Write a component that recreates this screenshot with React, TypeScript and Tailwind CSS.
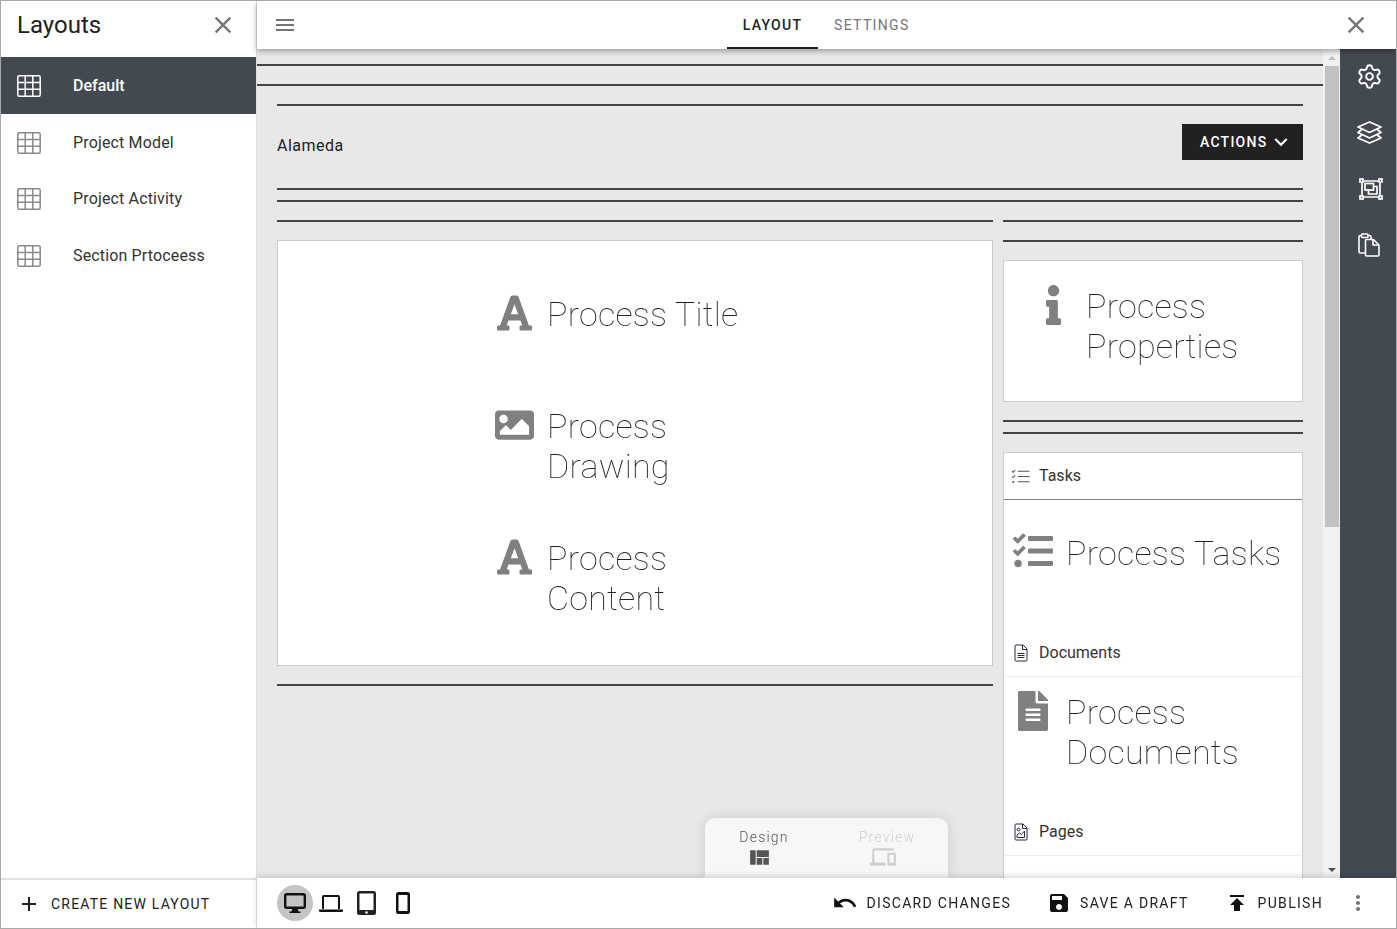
import React from "react";
import { FaFont, FaImage, FaInfo, FaTasks, FaFileAlt } from "react-icons/fa";
import { MdClose, MdMenu, MdExpandMore, MdUndo, MdSave, MdPublish, MdMoreVert, MdViewQuilt, MdDevices, MdAdd } from "react-icons/md";
import { Settings } from "lucide-react";

function Grid({ className = "" }: { className?: string }) {
  return (
    <svg viewBox="0 0 24 22" className={className} fill="none" stroke="currentColor" strokeWidth="1.5">
      <rect x="0.8" y="0.8" width="22.4" height="20.4" rx="1.5" />
      <path d="M0.8 7.5H23.2M0.8 14.3H23.2M8.2 0.8V21.2M15.8 0.8V21.2" />
    </svg>
  );
}

function Line({ className = "" }: { className?: string }) {
  return <div className={`h-[2px] bg-[#444444] ${className}`} />;
}

function Big({ icon, children, className = "" }: { icon: React.ReactNode; children: React.ReactNode; className?: string }) {
  return (
    <div className={`flex items-start ${className}`}>
      <div className="w-[40px] shrink-0 flex justify-center text-[#808080] mr-[13px]">{icon}</div>
      <div className="text-[34px] leading-[40px] font-thin tracking-[0.25px] text-[#212121] [will-change:transform]">{children}</div>
    </div>
  );
}

function SmallDoc({ image }: { image?: boolean }) {
  return (
    <svg viewBox="0 0 14 18" className="w-[14px] h-[18px] text-[#2e2840]" fill="none" stroke="currentColor" strokeWidth="1">
      <path d="M1 2a1 1 0 0 1 1-1h7l4 4v11a1 1 0 0 1-1 1H2a1 1 0 0 1-1-1z" />
      <path d="M8.500 1v4.500H13" />
      {image ? (
        <>
          <circle cx="4.500" cy="6.500" r="1.500" />
          <path d="M3 14.500v-2.500l2.500-2 2 1.500 3-3.500V14.500z" />
        </>
      ) : (
        <path d="M3.500 9.500h7M3.500 11.500h7M3.500 13.500h7" />
      )}
    </svg>
  );
}

const items = [
  { t: "Project Model", h: "h-[57px]" },
  { t: "Project Activity", h: "h-[56px]" },
  { t: "Section Prtoceess", h: "h-[57px]" },
];

export default function App() {
  return (
    <div className="w-[1397px] h-[929px] flex overflow-hidden border border-[#a8a8a8] bg-white text-[#212121] font-['Roboto',sans-serif]">
      <aside className="w-[256px] shrink-0 flex flex-col border-r border-[#e0e0e0] bg-white">
        <div className="h-[56px] flex items-center justify-between pl-4 pr-[19px] pb-[8px]">
          <span className="text-[24px] leading-[32px]">Layouts</span>
          <MdClose className="text-[28px] text-[#757575]" />
        </div>
        <div className="h-[57px] flex items-center bg-[#424950] text-white pl-4">
          <Grid className="w-[24px] h-[22px]" />
          <span className="ml-8 text-[16px] font-medium">Default</span>
        </div>
        {items.map(({ t, h }) => (
          <div key={t} className={`${h} flex items-center pl-4`}>
            <Grid className="w-[24px] h-[22px] text-[#8a8a8a]" />
            <span className="ml-8 text-[16px] tracking-[0.15px] text-[#333]">{t}</span>
          </div>
        ))}
        <div className="mt-auto h-[50px] border-t-2 border-[#e0e0e0] flex items-center pl-[16px]">
          <MdAdd className="text-[24px] text-[#212121]" />
          <span className="ml-[10px] text-[14px] tracking-[1.2px] text-[#212121]">CREATE NEW LAYOUT</span>
        </div>
      </aside>

      <div className="flex-1 min-w-0 flex flex-col">
        <header className="relative z-20 h-[48px] shrink-0 bg-white shadow-[0_2px_6px_rgba(0,0,0,0.35)] flex items-center pl-4 pr-[26px]">
          <MdMenu className="text-[24px] text-[#757575]" />
          <div className="ml-[430px] flex h-full">
            <div className="w-[91px] pt-[2px] flex items-center justify-center border-b-2 border-[#212121] text-[14px] font-medium tracking-[1.25px] text-[#212121]">LAYOUT</div>
            <div className="ml-[16px] pt-[1px] flex items-center text-[14px] tracking-[1.35px] text-[#757575]">SETTINGS</div>
          </div>
          <MdClose className="ml-auto text-[28px] text-[#757575]" />
        </header>

        <div className="flex-1 min-h-0 flex">
          <main className="relative flex-1 min-w-0 bg-[#e8e8e8] overflow-hidden pt-[15px]">
            <Line />
            <Line className="mt-[18px]" />
            <div className="px-5 pt-[18px]">
              <Line />
              <div className="h-[36px] mt-[18px] flex items-center justify-between">
                <span className="text-[16px] tracking-[0.5px] pt-[8px]">Alameda</span>
                <button className="w-[121px] h-[36px] pl-[18px] bg-[#212121] text-white text-[14px] font-medium tracking-[1.25px] flex items-center">
                  ACTIONS
                  <MdExpandMore className="text-[26px] ml-[1px]" />
                </button>
              </div>
              <Line className="mt-[28px]" />
              <Line className="mt-[10px]" />
              <div className="mt-[18px] flex gap-[10px] items-start">
                <div className="w-[716px] shrink-0">
                  <Line />
                  <div className="mt-[18px] h-[426px] bg-white border border-[#cccccc] pl-[216px] pt-[53px]">
                    <Big icon={<FaFont className="w-[40px] h-[40px] -mt-[1px] ml-[1px]" />} className="h-[112px]">Process Title</Big>
                    <Big icon={<FaImage className="w-[40px] h-[40px] -mt-[1px] ml-[1px]" />} className="h-[132px]">Process<br />Drawing</Big>
                    <Big icon={<FaFont className="w-[40px] h-[40px] -mt-[1px] ml-[1px]" />}>Process<br />Content</Big>
                  </div>
                  <Line className="mt-[18px]" />
                </div>
                <div className="flex-1 min-w-0">
                  <Line />
                  <Line className="mt-[18px]" />
                  <div className="mt-[18px] h-[142px] bg-white border border-[#cccccc] pl-[29px] pt-[25px]">
                    <Big icon={<FaInfo className="w-[15px] h-[40px] -mt-[1px]" />}>Process<br />Properties</Big>
                  </div>
                  <Line className="mt-[18px]" />
                  <Line className="mt-[10px]" />
                  <div className="mt-[18px] bg-white border-x border-t border-[#cccccc] h-[600px]">
                    <div className="h-[47px] flex items-center pl-[7px] border-b border-[#808080]">
                      <svg viewBox="0 0 18 14" className="w-[19px] h-[15px] text-[#555]" fill="none" stroke="currentColor" strokeWidth="1">
                        <path d="M1 2l1 1 2-2.200M1 7l1 1 2-2.200" />
                        <circle cx="2.200" cy="12.200" r="1" fill="currentColor" stroke="none" />
                        <path d="M6.500 2h11M6.500 7h11M6.500 12h11" />
                      </svg>
                      <span className="ml-[9px] text-[16px] text-[#333]">Tasks</span>
                    </div>
                    <div className="h-[130px] pl-[9px] pt-[33px]">
                      <Big icon={<FaTasks className="w-[40px] h-[40px] -mt-[2px]" />}>Process Tasks</Big>
                    </div>
                    <div className="h-[47px] flex items-center pl-[10px] border-b border-[#eeeeee]">
                      <SmallDoc />
                      <span className="ml-[11px] text-[16px] text-[#333]">Documents</span>
                    </div>
                    <div className="h-[132px] pl-[9px] pt-[15px]">
                      <Big icon={<FaFileAlt className="w-[30px] h-[40px] -mt-[1px]" />}>Process<br />Documents</Big>
                    </div>
                    <div className="h-[47px] flex items-center pl-[10px] border-b border-[#eeeeee]">
                      <SmallDoc image />
                      <span className="ml-[11px] text-[16px] text-[#333]">Pages</span>
                    </div>
                  </div>
                </div>
              </div>
            </div>
            <div className="absolute left-[448px] bottom-0 w-[243px] h-[60px] rounded-t-[10px] bg-[#f7f7f7] shadow-[0_0_14px_rgba(0,0,0,0.12)] flex pt-[10px]">
              <div className="w-[118px] flex flex-col items-center text-[14px] font-light leading-[18px] tracking-[1.2px] text-[#555] [will-change:transform]">
                Design
                <MdViewQuilt className="text-[25px] -ml-[9px] -mt-[1px] text-[#555]" />
              </div>
              <div className="ml-[19px] w-[90px] flex flex-col items-center text-[14px] font-light leading-[18px] tracking-[1.2px] text-[#cfcfcf] [will-change:transform]">
                Preview
                <MdDevices className="text-[26px] -ml-[8px] -mt-[2px] text-[#d0d0d0]" />
              </div>
            </div>
          </main>
          <div className="w-[17px] shrink-0 bg-[#f1f1f1] flex flex-col items-center">
            <div className="h-[17px] flex items-center justify-center">
              <div className="w-0 h-0 border-x-[4px] border-x-transparent border-b-[4px] border-b-[#c0c0c0]" />
            </div>
            <div className="w-[14px] h-[461px] bg-[#c1c1c1]" />
            <div className="mt-auto h-[17px] flex items-center justify-center">
              <div className="w-0 h-0 border-x-[4px] border-x-transparent border-t-[4px] border-t-[#505050]" />
            </div>
          </div>
          <nav className="w-[56px] shrink-0 bg-[#424950] text-white flex flex-col items-center pl-[2px] pt-[14px]">
            <Settings size={27} strokeWidth={1.7} />
            <svg viewBox="0 0 25 23" className="w-[25px] h-[23px] mt-[31px]" fill="none" stroke="currentColor" strokeWidth="1.8" strokeLinejoin="round">
              <path d="M12.500 1L24 6 12.500 11.500 1 6z" />
              <path d="M4.800 8.500L1 11.500 12.500 17 24 11.500 20.200 8.500" />
              <path d="M4.800 14L1 17 12.500 22 24 17 20.200 14" />
            </svg>
            <svg viewBox="0 0 24 22" className="w-[24px] h-[22px] mt-[34px] ml-[3px]" fill="none" stroke="currentColor" strokeWidth="1.700">
              <path d="M3 4.500v13M21 4.500v13M4.500 3h15M4.500 19h15" />
              <rect x="1" y="1" width="3" height="3" />
              <rect x="20" y="1" width="3" height="3" />
              <rect x="1" y="18" width="3" height="3" />
              <rect x="20" y="18" width="3" height="3" />
              <rect x="6" y="5.500" width="8.500" height="6.500" />
              <path d="M14.500 8.500H18v7.500H9.500v-4" />
            </svg>
            <svg viewBox="0 0 22 24" className="w-[22px] h-[24px] mt-[33px]" fill="none" stroke="currentColor" strokeWidth="1.600" strokeLinejoin="round">
              <path d="M7 20H2.500A1.500 1.500 0 0 1 1 18.500V4a1.500 1.500 0 0 1 1.500-1.500h1M10 2.500h1.500A1.500 1.500 0 0 1 13 4v2" />
              <rect x="3.500" y="1" width="6.500" height="3.500" rx="1" />
              <path d="M8.500 6.500h7l5.500 5.500v10a1 1 0 0 1-1 1H8.500a1 1 0 0 1-1-1V7.500a1 1 0 0 1 1-1z" />
              <path d="M15 6.500V12h6" />
            </svg>
          </nav>
        </div>

        <footer className="relative z-20 h-[50px] shrink-0 bg-white shadow-[0_-2px_6px_rgba(0,0,0,0.14)] flex items-center pl-5 pr-[26px]">
          <div className="w-[36px] h-[36px] rounded-full bg-[#c4c4c4] flex items-center justify-center">
            <svg viewBox="0 0 22 20" className="w-[22px] h-[20px] text-[#111]" fill="none" stroke="currentColor">
              <rect x="1.200" y="1.200" width="19.600" height="13.600" rx="1.500" strokeWidth="2.400" />
              <path d="M8.500 15h5l1 3.500h2V20h-11v-1.500h2z" fill="currentColor" stroke="none" />
            </svg>
          </div>
          <svg viewBox="0 0 24 17" className="w-[24px] h-[17px] ml-[6px] text-[#111]" fill="none" stroke="currentColor" strokeWidth="2">
            <path d="M4 14V2a1 1 0 0 1 1-1h14a1 1 0 0 1 1 1v12" />
            <path d="M0 14.500h24v1a1.500 1.500 0 0 1-1.500 1.500h-21A1.500 1.500 0 0 1 0 15.500z" fill="currentColor" stroke="none" />
          </svg>
          <svg viewBox="0 0 19 24" className="w-[19px] h-[24px] ml-[14px] text-[#222]" fill="none">
            <rect x="0" y="0" width="19" height="24" rx="2.500" fill="currentColor" />
            <rect x="2.500" y="2.500" width="14" height="16.500" fill="#fff" />
            <circle cx="9.500" cy="21.500" r="1.300" fill="#fff" />
          </svg>
          <svg viewBox="0 0 14 22" className="w-[14px] h-[22px] ml-[20px] text-[#111]" fill="none">
            <rect x="0" y="0" width="14" height="22" rx="2.500" fill="currentColor" />
            <rect x="2.500" y="3" width="9" height="16" fill="#fff" />
          </svg>
          <div className="ml-auto flex items-center text-[14px] tracking-[1.3px] text-[#212121]">
            <MdUndo className="text-[26px] text-[#111]" />
            <span className="ml-[9px]">DISCARD CHANGES</span>
            <MdSave className="ml-[36px] text-[24px] text-[#111]" />
            <span className="ml-[9px]">SAVE A DRAFT</span>
            <MdPublish className="ml-[36px] text-[24px] text-[#111]" />
            <span className="ml-[9px]">PUBLISH</span>
            <MdMoreVert className="ml-[23px] text-[24px] text-[#757575]" />
          </div>
        </footer>
      </div>
    </div>
  );
}
